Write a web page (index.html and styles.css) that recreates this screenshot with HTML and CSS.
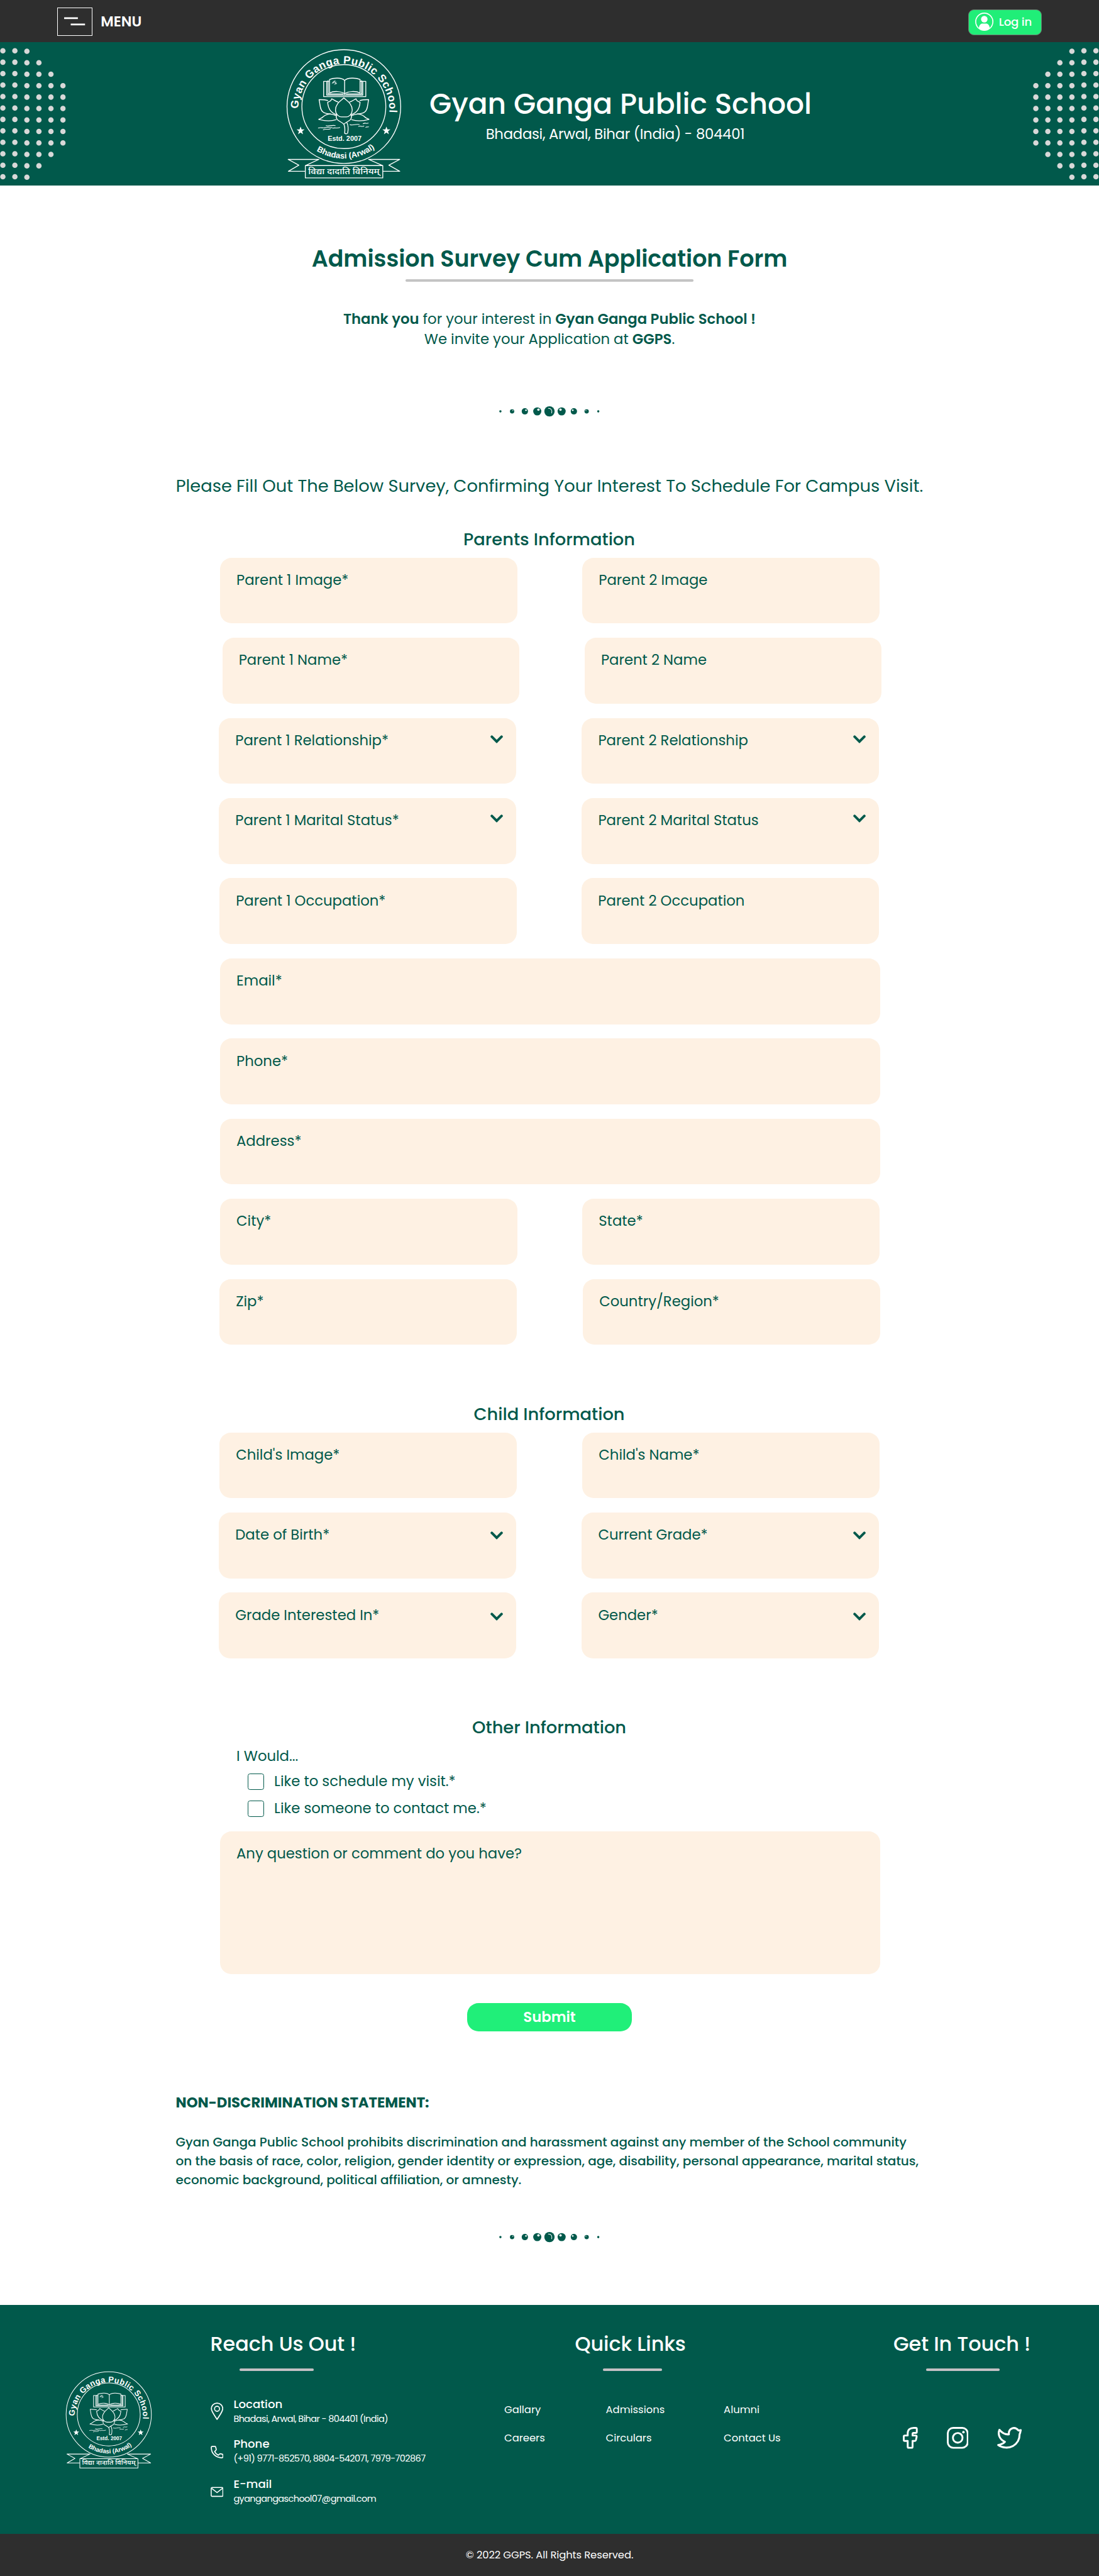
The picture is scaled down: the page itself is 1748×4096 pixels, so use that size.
FILE: index.html
```
<!DOCTYPE html>
<html lang="en">
<head>
<meta charset="utf-8">
<title>Gyan Ganga Public School – Admission Survey</title>
<link rel="stylesheet" href="styles.css">
</head>
<body>
<svg class="defs" width="0" height="0" aria-hidden="true">
  <defs>
    <path id="arc-top" d="M154 360A239 239 0 1 1 631 384"/>
    <path id="arc-bottom" d="M249 579A272 272 0 0 0 566 558"/>
    <path id="star" d="M0-21 5.5-6.5 21-6 8.5 3.500 13 19 0 10-13 19-8.500 3.500-21-6-5.500-6.500Z"/>
    <symbol id="crest" viewBox="90 40 610 690">
      <g fill="none" stroke="#fff" stroke-width="4.500" stroke-linejoin="round" stroke-linecap="round">
        <circle cx="393" cy="348" r="298"/>
        <circle cx="393" cy="348" r="220"/>
        <path d="M303 216H287V296H508V216H492M303 216V288H492V216M303 216h11M492 216h-14"/>
        <path d="M318 206C340 196 384 196 397 211C412 196 456 196 478 206V277C456 265 415 267 397 281C380 267 340 265 318 277Z"/>
        <path d="M397 211V281M310 212V282H388M486 212V282H406"/>
        <path stroke-width="2.500" d="M331 228l16-17-4 11 10-3-6 7 9 1-12 5M332 222l8 2M338 215v8"/>
        <path d="M393 302C407 317 436 330 437 366C436 388 421 402 406 402H381C365 402 350 388 349 366C350 330 379 317 393 302Z"/>
        <path d="M362 324C347 320 340 311 329 307C328 320 319 320 308 326C311 358 322 380 358 392"/>
        <path d="M424 324C438 320 446 311 457 307C458 320 467 320 478 326C475 358 464 380 428 392"/>
        <path d="M308 316C292 311 278 312 263 312C269 332 266 368 286 378C298 385 310 386 324 387"/>
        <path d="M478 316C494 311 508 312 523 312C517 332 520 368 500 378C488 385 476 386 462 387"/>
        <path d="M354 396C325 382 301 388 286 400C280 407 270 411 261 415C290 423 325 425 352 417"/>
        <path d="M432 396C461 382 485 388 500 400C506 407 516 411 525 415C496 423 461 425 434 417"/>
        <path d="M354 396C347 424 384 426 393 441C402 426 439 424 432 396M393 441C401 457 399 470 397 488C403 492 409 491 413 487C417 466 417 449 409 432"/>
        <path stroke-width="3.500" d="M259 460C275 455 283 463 298 458S318 462 331 458M285 470C300 462 306 471 322 465M300 448C316 455 330 442 348 448M334 461C349 457 355 464 372 458M425 443C443 449 452 438 474 442M470 452C480 447 485 456 498 450M494 438C507 430 508 440 521 435M508 457C515 452 517 457 523 454"/>
        <path d="M262 625H101L157 655 102 687H191M523 625H686L629 655 686 687H597M262 625 193 657M523 625 595 657M191 657H597V722H191Z"/>
      </g>
      <g fill="#fff">
        <use href="#star" x="166" y="474"/>
        <use href="#star" x="616" y="474"/>
        <text class="crest-name"><textPath href="#arc-top">Gyan Ganga Public School</textPath></text>
        <text class="crest-place"><textPath href="#arc-bottom">Bhadasi (Arwal)</textPath></text>
        <text class="crest-year" x="397" y="528">Estd. 2007</text>
        <text class="crest-motto" x="393" y="701" textLength="374" lengthAdjust="spacingAndGlyphs">विद्या दादाति विनियम्</text>
      </g>
    </symbol>
    <symbol id="beads" viewBox="0 0 180 20">
      <g fill="#01594b">
        <circle cx="4.300" cy="10" r="2"/><circle cx="24.700" cy="10" r="3.800"/><circle cx="47" cy="10" r="5.500"/><circle cx="68.700" cy="10" r="7.100"/>
        <circle cx="90" cy="10" r="9"/>
        <circle cx="111.300" cy="10" r="7.100"/><circle cx="132.700" cy="10" r="5.500"/><circle cx="155" cy="10" r="3.800"/><circle cx="175.300" cy="10" r="2"/>
      </g>
      <g fill="#fff">
        <circle cx="26" cy="8.500" r=".8"/><circle cx="49" cy="8" r="1.400"/><circle cx="70.700" cy="7" r="2.100"/>
        <circle cx="109.300" cy="7" r="2.100"/><circle cx="130.700" cy="8" r="1.400"/><circle cx="153.700" cy="8.500" r=".8"/>
      </g>
      <path d="M88 4.700C93 4.500 95 8 93.800 13" fill="none" stroke="#fff" stroke-width="1.100" stroke-linecap="round"/>
    </symbol>
    <symbol id="chevron" viewBox="0 0 22 14">
      <path d="M2.500 2.700 11 11.200 19.500 2.700" fill="none" stroke="#01594b" stroke-width="4.400" stroke-linecap="round"/>
    </symbol>
    <symbol id="dots" viewBox="0 0 115 250">
      <g fill="none" stroke="#d8d8d8" stroke-width="9.400" stroke-linecap="round" stroke-dasharray="0 20">
        <path d="M5 15V236M26 15V236M47 16V237M68 36V217M89 56V197M110 76V177"/>
      </g>
    </symbol>
  </defs>
</svg>

<div class="topbar">
  <a class="menu">
    <span class="menu-box">
      <svg viewBox="0 0 58 46"><path d="M11 17.500H35M22.500 28.500H47.500" stroke="#fff" stroke-width="3"/></svg>
    </span>
    <span class="menu-label">MENU</span>
  </a>
  <a class="login">
    <svg viewBox="0 0 32 32">
      <circle cx="16" cy="16" r="15" fill="none" stroke="#fff" stroke-width="1.800"/>
      <circle cx="16" cy="11.500" r="5.700" fill="#fff"/>
      <path d="M6.500 27C7 22 10 19.300 12.500 19.300H19.500C22 19.300 25 22 25.500 27C20 32.500 12 32.500 6.500 27Z" fill="#fff"/>
    </svg>
    <span>Log in</span>
  </a>
</div>

<header class="banner">
  <svg class="dots"><use href="#dots"/></svg>
  <svg class="banner-crest"><use href="#crest"/></svg>
  <div class="banner-text">
    <div class="school">Gyan Ganga Public School</div>
    <div class="place">Bhadasi, Arwal, Bihar (India) - 804401</div>
  </div>
  <svg class="dots dots-right"><use href="#dots"/></svg>
</header>

<main>
  <h1>Admission Survey Cum Application Form</h1>
  <div class="rule"></div>
  <p class="thanks"><b>Thank you</b> for your interest in <b>Gyan Ganga Public School !</b><br>We invite your Application at <b>GGPS</b>.</p>
  <svg class="beads"><use href="#beads"/></svg>
  <p class="lead">Please Fill Out The Below Survey, Confirming Your Interest To Schedule For Campus Visit.</p>

  <form class="form">
    <h2>Parents Information</h2>
    <div class="rows">
      <div class="row"><label class="field">Parent 1 Image*</label><label class="field">Parent 2 Image</label></div>
      <div class="row row-in"><label class="field">Parent 1 Name*</label><label class="field">Parent 2 Name</label></div>
      <div class="row row-out"><label class="field">Parent 1 Relationship*<svg class="chev"><use href="#chevron"/></svg></label><label class="field">Parent 2 Relationship<svg class="chev"><use href="#chevron"/></svg></label></div>
      <div class="row row-out"><label class="field">Parent 1 Marital Status*<svg class="chev chev-high"><use href="#chevron"/></svg></label><label class="field">Parent 2 Marital Status<svg class="chev chev-high"><use href="#chevron"/></svg></label></div>
      <div class="row row-job"><label class="field">Parent 1 Occupation*</label><label class="field">Parent 2 Occupation</label></div>
      <div class="row"><label class="field field-wide">Email*</label></div>
      <div class="row"><label class="field field-wide">Phone*</label></div>
      <div class="row"><label class="field field-wide">Address*</label></div>
      <div class="row"><label class="field">City*</label><label class="field">State*</label></div>
      <div class="row row-zip"><label class="field">Zip*</label><label class="field">Country/Region*</label></div>
    </div>

    <h2 class="next">Child Information</h2>
    <div class="rows">
      <div class="row row-child"><label class="field">Child's Image*</label><label class="field">Child's Name*</label></div>
      <div class="row row-out"><label class="field">Date of Birth*<svg class="chev chev-low"><use href="#chevron"/></svg></label><label class="field">Current Grade*<svg class="chev chev-low"><use href="#chevron"/></svg></label></div>
      <div class="row row-out"><label class="field">Grade Interested In*<svg class="chev chev-lower"><use href="#chevron"/></svg></label><label class="field">Gender*<svg class="chev chev-lower"><use href="#chevron"/></svg></label></div>
    </div>

    <h2 class="next">Other Information</h2>
    <div class="would">I Would...</div>
    <div class="checks">
      <label class="check"><span class="tick"></span>Like to schedule my visit.*</label>
      <label class="check"><span class="tick"></span>Like someone to contact me.*</label>
    </div>
    <label class="field field-wide comment">Any question or comment do you have?</label>
    <button class="submit" type="button">Submit</button>
  </form>

  <section class="statement">
    <h3>NON-DISCRIMINATION STATEMENT:</h3>
    <p>Gyan Ganga Public School prohibits discrimination and harassment against any member of the School community<br>on the basis of race, color, religion, gender identity or expression, age, disability, personal appearance, marital status,<br>economic background, political affiliation, or amnesty.</p>
  </section>
  <svg class="beads beads-end"><use href="#beads"/></svg>
</main>

<footer>
  <div class="footer-main">
    <svg class="footer-crest"><use href="#crest"/></svg>
    <section class="reach">
      <h4>Reach Us Out !</h4>
      <div class="bar"></div>
      <div class="contacts">
        <div class="contact">
          <svg viewBox="0 0 22.500 51.500"><path d="M11.250 39.500C7 32.500 1.300 26 1.300 20.700A9.950 9.600 0 0 1 21.200 20.700C21.200 26 15.500 32.500 11.250 39.500Z" fill="none" stroke="#fff" stroke-width="1.900" stroke-linejoin="round"/><circle cx="11.250" cy="21" r="4.400" fill="none" stroke="#fff" stroke-width="1.800"/></svg>
          <div><div class="contact-title">Location</div><div class="contact-text">Bhadasi, Arwal, Bihar - 804401 (India)</div></div>
        </div>
        <div class="contact">
          <svg viewBox="0 0 22.500 51.500"><path d="M3.200 17.500H7.600C8.600 17.500 8.700 18 8.900 19L9.800 22.600C10 23.600 9.500 24 8.900 24.600L7 26.400C8.500 29.600 10.500 31.400 13.500 32.800L15.500 31C16 30.400 16.500 30.200 17.300 30.400L20.500 31.200C21.400 31.400 21.600 31.800 21.600 32.600V35.500C21.600 36.800 20.800 37.400 19.600 37.400C9 37.200 1.200 30 1.200 19.500C1.200 18.200 2 17.500 3.200 17.500Z" fill="none" stroke="#fff" stroke-width="1.900" stroke-linejoin="round"/></svg>
          <div><div class="contact-title">Phone</div><div class="contact-text">(+91) 9771-852570, 8804-542071, 7979-702867</div></div>
        </div>
        <div class="contact">
          <svg viewBox="0 0 22.500 51.500"><rect x="1" y="18.900" width="20.500" height="15.600" rx="1.800" fill="none" stroke="#fff" stroke-width="1.700"/><path d="M1.800 20.500 11.250 27.800 20.700 20.500" fill="none" stroke="#fff" stroke-width="1.700"/></svg>
          <div><div class="contact-title">E-mail</div><div class="contact-text">gyangangaschool07@gmail.com</div></div>
        </div>
      </div>
    </section>
    <section class="quick">
      <h4>Quick Links</h4>
      <div class="bar"></div>
      <nav class="links">
        <a>Gallary</a><a>Admissions</a><a>Alumni</a>
        <a>Careers</a><a>Circulars</a><a>Contact Us</a>
      </nav>
    </section>
    <section class="touch">
      <h4>Get In Touch !</h4>
      <div class="bar"></div>
      <div class="social">
        <svg class="fb" viewBox="0 0 26 38"><path d="M22.500 1.600H19C12.500 1.600 8.500 5 8.500 11V15H3.500Q1.600 15 1.600 17V22.500Q1.600 24.400 3.500 24.400H8.500V34.500Q8.500 36.400 10.400 36.400H15Q17 36.400 17 34.500V24.400H21Q22.500 24.400 22.900 22.800L24.100 17.500Q24.500 15 22.300 15H17V12Q17 10.400 18.700 10.400H22.500Q24.400 10.400 24.400 8.500V3.500Q24.400 1.600 22.500 1.600Z" fill="none" stroke="#fff" stroke-width="3.200" stroke-linejoin="round"/></svg>
        <svg class="ig" viewBox="0 0 38 38"><rect x="1.600" y="1.600" width="34.800" height="34.800" rx="9.500" fill="none" stroke="#fff" stroke-width="3.200"/><circle cx="19" cy="19" r="8.400" fill="none" stroke="#fff" stroke-width="3.200"/><circle cx="29" cy="9" r="2.200" fill="#fff"/></svg>
        <svg class="tw" viewBox="0 0 43 38"><path d="M41.200 5.500C39.500 6 38.500 6 37.200 6.200C31 -1.500 19.500 1.500 20.500 13C13.500 13.500 8 10 4 5C1 12 3.500 21.500 13.500 26C10.500 29.500 6.500 30.500 1.800 31.500C9.500 37 20 37.500 27.500 33.500C35.500 29 39.300 21 39.300 12.500C40.200 10.800 40.700 8.500 41.200 5.500Z" fill="none" stroke="#fff" stroke-width="3.400" stroke-linejoin="round"/></svg>
      </div>
    </section>
  </div>
  <div class="copyright">© 2022 GGPS. All Rights Reserved.</div>
</footer>
</body>
</html>
```
FILE: styles.css
```
/* 1rem is ten design pixels of a 1920-wide layout */
html { font-size: 9.1035px; }
* { box-sizing: border-box; }
body {
  margin: 0;
  font-family: Poppins, Inter, "Open Sans", sans-serif;
  font-size: 2.5rem;
  line-height: 3rem;
  color: #01594b;
  background: #fff;
  overflow-x: hidden;
}
h1, h2, h3, h4, p { margin: 0; font-weight: 500; }
svg { display: block; flex: none; }
.defs { position: absolute; }
b { font-weight: 600; }

/* crest lettering */
.crest-name, .crest-place, .crest-year { font-family: "Liberation Sans", Arial, sans-serif; font-weight: 700; }
.crest-name { font-size: 57px; letter-spacing: 1.6px; }
.crest-place { font-size: 43px; }
.crest-year { font-size: 36px; text-anchor: middle; }
.crest-motto { font-family: "Noto Sans Devanagari", "Noto Sans", sans-serif; font-weight: 500; font-size: 44px; text-anchor: middle; }

/* top bar */
.topbar { height: 7.4rem; padding: 0 10rem; background: #2e2e2e; color: #fff; display: flex; justify-content: space-between; align-items: center; }
.menu { display: flex; align-items: center; gap: 1.4rem; padding-top: .2rem; }
.menu-box { width: 6.2rem; height: 5rem; border: .2rem solid #fff; }
.menu-box svg { width: 5.8rem; height: 4.6rem; }
.menu-label { font-weight: 600; }
.login { width: 12.8rem; height: 4.5rem; margin-top: .3rem; padding-left: 1.1rem; display: flex; align-items: center; gap: .9rem; background: #20ee78; border: .1rem solid #6c7a70; border-radius: 1rem; font-size: 2rem; font-weight: 500; letter-spacing: -.01em; white-space: nowrap; }
.login svg { width: 3.2rem; height: 3.2rem; }

/* school banner */
.banner { height: 25rem; background: #01594b; color: #fff; display: flex; align-items: flex-start; }
.dots { width: 11.5rem; height: 25rem; }
.dots-right { margin-left: auto; transform: scaleX(-1); }
.banner-crest { width: 20.33rem; height: 23rem; margin: .93rem 0 0 38.5rem; }
.banner-text { width: 66.8rem; margin-left: 4.7rem; padding-top: 7.8rem; text-align: center; }
.school { font-size: 5rem; line-height: 6rem; font-weight: 500; white-space: nowrap; }
.place { padding: .5rem 1.9rem 0 0; line-height: 3.5rem; letter-spacing: -.0115em; }

/* intro */
main { display: flex; flex-direction: column; align-items: center; height: 370.2rem; padding-top: 9.84rem; }
h1 { font-size: 4rem; line-height: 6rem; font-weight: 600; letter-spacing: -.0005em; }
.rule { width: 50.4rem; height: .4rem; margin-top: .56rem; border-radius: .2rem; background: #c4c4c4; }
.thanks { margin-top: 4.84rem; text-align: center; font-weight: 400; line-height: 3.5rem; }
.beads { width: 18rem; height: 2rem; margin-top: 9.86rem; }
.lead { margin-top: 9.86rem; font-size: 3rem; line-height: 4.5rem; font-weight: 400; white-space: nowrap; }

/* survey form */
.form { width: 115.3rem; margin: 4.79rem 0 0 .2rem; display: flex; flex-direction: column; }
h2 { font-size: 3rem; line-height: 4.5rem; text-align: center; padding-right: .3rem; }
.next { margin-top: 9.93rem; }
.rows { margin-top: .86rem; display: flex; flex-direction: column; gap: 2.5rem; }
.row { display: flex; gap: 11.4rem; }
.row-in { margin-left: .4rem; }
.row-out { margin-left: -.2rem; gap: 11.5rem; }
.row-job { margin-left: -.1rem; }
.row-zip { margin-left: -.1rem; gap: 11.6rem; }
.row-child { margin-left: -.1rem; gap: 11.5rem; }
.field { flex: none; display: flex; justify-content: space-between; align-items: flex-start; width: 51.9rem; height: 11.5rem; padding: 2.44rem 2.3rem 0 2.85rem; border-radius: 2rem; background: #fef1e3; white-space: nowrap; }
.field-wide { width: 115.3rem; }
.chev { width: 2.2rem; height: 1.4rem; margin-top: .61rem; }
.chev-high { margin-top: .41rem; }
.chev-low { margin-top: .86rem; }
.chev-lower { margin-top: 1.06rem; }
.would { margin: 1.13rem 0 0 2.85rem; }
.checks { display: flex; flex-direction: column; gap: 1.8rem; margin: 1.51rem 0 2.5rem 4.8rem; }
.check { display: flex; align-items: center; gap: 1.75rem; height: 2.9rem; }
.tick { width: 2.9rem; height: 2.9rem; border: 1px solid #01594b; border-radius: .4rem; }
.comment { height: 25rem; }
.submit { align-self: center; width: 28.8rem; height: 5rem; margin: 5rem .2rem 0 0; padding: 0; border: 0; border-radius: 2rem; background: #20ef79; color: #fff; font: inherit; font-weight: 600; }

/* statement */
.statement { width: 130.6rem; margin-top: 10.63rem; white-space: nowrap; }
h3 { font-size: 2.5rem; line-height: 3.6rem; font-weight: 700; }
.statement p { margin-top: 3.42rem; font-size: 2.2rem; line-height: 3.3rem; }
.beads-end { margin-top: 7.35rem; }

/* footer */
footer { color: #fff; }
.footer-main { height: 40rem; background: #01594b; display: flex; align-items: flex-start; }
.footer-crest { width: 15.25rem; height: 17.25rem; margin: 11.45rem 0 0 11.45rem; }
.reach, .quick, .touch { flex: none; padding-top: 4.4rem; }
.reach { width: 43.35rem; margin-left: 10.05rem; }
.quick { width: 50rem; margin-left: 8rem; }
.touch { width: 26rem; margin-left: 18rem; }
h4 { font-size: 3.5rem; line-height: 5rem; letter-spacing: -.002em; white-space: nowrap; }
.reach h4 { padding-left: .0rem; }
.quick h4 { padding-left: 12.35rem; }
.bar { width: 12.9rem; height: .4rem; margin: 1.7rem 0 0 5.13rem; border-radius: .2rem; background: #c4c0c4; }
.quick .bar { width: 10.4rem; margin-left: 17.2rem; }
.touch .bar { margin-left: 5.7rem; }
.contacts { margin-top: 4.5rem; display: flex; flex-direction: column; gap: 1.85rem; }
.contact { display: flex; gap: 1.8rem; height: 5.15rem; }
.contact svg { width: 2.25rem; height: 5.15rem; }
.contact-title { font-size: 2rem; line-height: 2.6rem; font-weight: 500; }
.contact-text { margin-top: .15rem; font-size: 1.6rem; line-height: 2.4rem; letter-spacing: -.043em; white-space: nowrap; }
.links { display: grid; grid-template-columns: 17.75rem 20.6rem auto; row-gap: 2.3rem; margin-top: 5.5rem; font-size: 1.8rem; line-height: 2.7rem; }
.social { display: flex; margin: 9.8rem 0 0 1.7rem; }
.social svg { height: 3.8rem; }
.fb { width: 2.6rem; }
.ig { width: 3.8rem; margin-left: 5rem; }
.tw { width: 4.3rem; margin-left: 5rem; }
.copyright { height: 7.4rem; line-height: 7.4rem; background: #2e2e2e; text-align: center; font-size: 1.8rem; letter-spacing: -.005em; }
```
